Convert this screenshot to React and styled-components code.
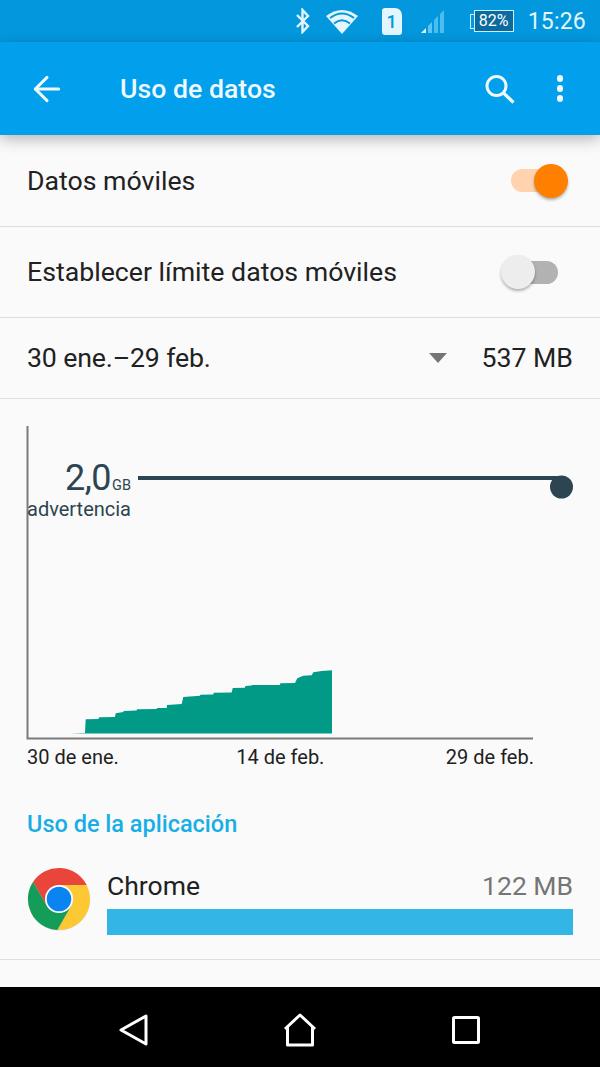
import React from 'react';
import styled, { createGlobalStyle } from 'styled-components';
import { ArrowLeft } from 'lucide-react';

const GlobalStyle = createGlobalStyle`
	html, body {
		margin: 0;
		padding: 0;
		background: #fafafa;
		font-family: Roboto, "Liberation Sans", sans-serif;
	}
`;

const Screen = styled.div`
	width: 600px;
	height: 1067px;
	display: flex;
	flex-direction: column;
	overflow: hidden;
	background: #fafafa;
	color: #212121;
`;

const StatusBar = styled.div`
	height: 42px;
	flex: none;
	background: #0398dd;
	color: #e3f5fd;
	display: flex;
	align-items: center;
	justify-content: flex-end;
	padding-right: 14px;
`;

const StatusIcon = styled.svg`
	display: block;
	flex: none;
	margin-left: ${(p) => p.$gap || 0}px;
`;

const SimBadge = styled.div`
	width: 20px;
	height: 27px;
	margin-left: 23px;
	background: #e3f5fd;
	border-radius: 3px 7px 3px 3px;
	color: #0398dd;
	font-size: 18px;
	font-weight: 500;
	line-height: 27px;
	text-align: center;
`;

const Battery = styled.div`
	position: relative;
	width: 38px;
	height: 20px;
	margin-left: 29px;
	background: #0b6a9e;
	border: 1px solid #cfeefc;
	color: #fff;
	font-size: 16px;
	line-height: 20px;
	text-align: center;
	&::before {
		content: '';
		position: absolute;
		left: -5px;
		top: 3px;
		width: 3px;
		height: 13px;
		border: 1px solid #cfeefc;
		border-right: 0;
	}
`;

const Clock = styled.div`
	margin-left: 14px;
	font-size: 23px;
	letter-spacing: 0.2px;
`;

const Toolbar = styled.div`
	height: 93px;
	flex: none;
	background: #029fec;
	color: #eef9fe;
	display: flex;
	align-items: center;
	padding: 0 37px 0 27px;
	box-shadow: 0 4px 14px rgba(0, 0, 0, 0.28);
	position: relative;
	z-index: 1;
`;

const Title = styled.div`
	margin-left: 53px;
	flex: 1;
	font-size: 26.7px;
	font-weight: 500;
`;

const MoreDots = styled.div`
	display: flex;
	flex-direction: column;
	gap: 3.5px;
	margin-left: 42px;
	span {
		width: 6.5px;
		height: 6.5px;
		border-radius: 50%;
		background: #eef9fe;
	}
`;

const Row = styled.div`
	height: ${(p) => p.$height}px;
	flex: none;
	display: flex;
	align-items: center;
	padding: 0 27px;
	border-bottom: 1px solid #dedede;
	font-size: 26.7px;
`;

const RowLabel = styled.div`
	flex: 1;
`;

const DateLabel = styled(RowLabel)`
	letter-spacing: -0.15px;
`;

const SwitchTrack = styled.div`
	position: relative;
	width: 47px;
	height: 23px;
	margin-right: 15px;
	border-radius: 12px;
	background: ${(p) => (p.$on ? '#ffd3ad' : '#b2b2b2')};
`;

const SwitchThumb = styled.div`
	position: absolute;
	top: -5.5px;
	${(p) => (p.$on ? 'right: -10px;' : 'left: -10px;')}
	width: 34px;
	height: 34px;
	border-radius: 50%;
	background: ${(p) => (p.$on ? '#ff8000' : '#ededed')};
	box-shadow: 0 2px 3px rgba(0, 0, 0, 0.3);
`;

const Caret = styled.div`
	width: 0;
	height: 0;
	margin-right: 34px;
	border-left: 9px solid transparent;
	border-right: 9px solid transparent;
	border-top: 10px solid #757575;
`;

const ChartArea = styled.div`
	position: relative;
	height: 342px;
	flex: none;
`;

const ChartSvg = styled.svg`
	display: block;
	position: absolute;
	left: 0;
	top: 0;
`;

const LimitLabel = styled.div`
	position: absolute;
	left: 27px;
	top: 68px;
	width: 104px;
	color: #2d4550;
	text-align: right;
`;

const LimitValue = styled.div`
	font-size: 36px;
	line-height: 22px;
	letter-spacing: -0.5px;
	small {
		font-size: 14.5px;
		margin-left: 1px;
		letter-spacing: 0;
	}
`;

const LimitCaption = styled.div`
	font-size: 20px;
	line-height: 24px;
	white-space: nowrap;
`;

const AxisLabels = styled.div`
	display: flex;
	justify-content: space-between;
	width: 507px;
	margin-left: 27px;
	margin-top: 4px;
	font-size: 20px;
	line-height: 24px;
	span:nth-child(2) {
		margin-right: 4px;
	}
`;

const SectionTitle = styled.div`
	margin: 41px 0 0 27px;
	font-size: 23.5px;
	font-weight: 500;
	line-height: 28px;
	color: #17aee6;
`;

const AppRow = styled.div`
	display: flex;
	align-items: flex-start;
	margin-top: 29px;
	padding: 0 27px;
	height: 92px;
	border-bottom: 1px solid #dedede;
`;

const AppBody = styled.div`
	flex: 1;
	margin-left: 16px;
`;

const AppHead = styled.div`
	display: flex;
	justify-content: space-between;
	font-size: 26.5px;
	line-height: 34px;
	margin-top: 2px;
	span + span {
		color: #757575;
	}
`;

const UsageBar = styled.div`
	height: 26px;
	margin-top: 6px;
	background: #33b5e5;
`;

const NavBar = styled.div`
	margin-top: auto;
	height: 74px;
	padding-top: 6px;
	flex: none;
	background: #000;
	display: grid;
	grid-template-columns: repeat(3, 166px);
	justify-content: center;
	justify-items: center;
	align-items: center;
`;

function ChromeLogo() {
	return (
		<svg width="64" height="64" viewBox="0 0 64 64" style={{ flex: 'none' }}>
			<circle cx="32" cy="32.6" r="31" fill="#000" opacity="0.14" />
			<path d="M59.7 18 A31 31 0 0 0 6 15 L19.9 39 L32 32 L32 18 Z" fill="#e9453a" />
			<path d="M59.7 18 A31 31 0 0 1 30.3 63 L44.1 39 L32 32 L32 18 Z" fill="#fcc934" />
			<path d="M6 15 A31 31 0 0 0 30.3 63 L44.1 39 L32 32 L19.9 39 Z" fill="#149d58" />
			<circle cx="32" cy="32" r="14" fill="#fff" />
			<circle cx="32" cy="32" r="12.3" fill="#0a84f0" />
		</svg>
	);
}

const areaPoints =
	'70,733.5 85,733 85.7,719.3 98.3,719 99.3,717.3 115,717 115.7,713.3 123.3,712 123.7,711 136.7,710.5 137,709.3 156.7,709 157,708 166.7,708 167,705 181.7,704 183.3,697 200,695.7 200.3,694.7 213.3,694.5 213.7,692.7 231.7,692.5 232.7,688 245,687.7 245.3,686 251.7,685.5 252,685 280,685 280.3,683.3 295,683 297.3,678.3 303.3,675.7 311.7,675.3 313.3,672.3 321.7,671 332,670.3 332,733.5';

export default function App() {
	return (
		<Screen>
			<GlobalStyle />
			<StatusBar>
				<StatusIcon width="16" height="26" viewBox="0 0 16 26">
					<path d="M2 7 L13 18 L7.5 24 L7.5 2 L13 8 L2 19" fill="none" stroke="#e3f5fd" strokeWidth="2.4" />
				</StatusIcon>
				<StatusIcon $gap={14} width="34" height="28" viewBox="0 0 34 28">
					<path d="M17 27 L1 9 Q17 -3 33 9 Z" fill="#e3f5fd" />
					<path d="M5 11 Q17 2 29 11" fill="none" stroke="#0398dd" strokeWidth="2" />
					<path d="M9 16.5 Q17 10 25 16.5" fill="none" stroke="#0398dd" strokeWidth="2" />
				</StatusIcon>
				<SimBadge>1</SimBadge>
				<StatusIcon $gap={18} width="25" height="26" viewBox="0 0 25 26">
					<path d="M1 25 L6 20 L6 25 Z" fill="#e3f5fd" />
					<path d="M8 18 L12 14 L12 25 L8 25 Z" fill="#5cc6f2" />
					<path d="M14 12 L18 8 L18 25 L14 25 Z" fill="#4cbdef" />
					<path d="M20 6 L24 2 L24 25 L20 25 Z" fill="#4cbdef" />
				</StatusIcon>
				<Battery>82%</Battery>
				<Clock>15:26</Clock>
			</StatusBar>
			<Toolbar>
				<ArrowLeft size={40} strokeWidth={1.8} />
				<Title>Uso de datos</Title>
				<svg width="30" height="30" viewBox="0 0 30 30">
					<circle cx="11.5" cy="12" r="9.5" fill="none" stroke="#eef9fe" strokeWidth="3" />
					<path d="M18.5 19 L28.5 28.5" stroke="#eef9fe" strokeWidth="3.2" />
				</svg>
				<MoreDots>
					<span />
					<span />
					<span />
				</MoreDots>
			</Toolbar>
			<Row $height={91}>
				<RowLabel>Datos móviles</RowLabel>
				<SwitchTrack $on>
					<SwitchThumb $on />
				</SwitchTrack>
			</Row>
			<Row $height={90}>
				<RowLabel>Establecer límite datos móviles</RowLabel>
				<SwitchTrack>
					<SwitchThumb />
				</SwitchTrack>
			</Row>
			<Row $height={80}>
				<DateLabel>30 ene.–29 feb.</DateLabel>
				<Caret />
				<span>537 MB</span>
			</Row>
			<ChartArea>
				<ChartSvg width="600" height="342" viewBox="0 399 600 342">
					<path d="M27.5 426 V738.5 H533" fill="none" stroke="#7a7a7a" strokeWidth="2" />
					<polygon points={areaPoints} fill="#009a87" />
					<path d="M138 478 H561" stroke="#2d4550" strokeWidth="4" />
					<circle cx="561.5" cy="487" r="11.5" fill="#2d4550" />
				</ChartSvg>
				<LimitLabel>
					<LimitValue>
						2,0<small>GB</small>
					</LimitValue>
					<LimitCaption>advertencia</LimitCaption>
				</LimitLabel>
			</ChartArea>
			<AxisLabels>
				<span>30 de ene.</span>
				<span>14 de feb.</span>
				<span>29 de feb.</span>
			</AxisLabels>
			<SectionTitle>Uso de la aplicación</SectionTitle>
			<AppRow>
				<ChromeLogo />
				<AppBody>
					<AppHead>
						<span>Chrome</span>
						<span>122 MB</span>
					</AppHead>
					<UsageBar />
				</AppBody>
			</AppRow>
			<NavBar>
				<svg width="32" height="34" viewBox="0 0 32 34">
					<path d="M3 17 L28 3 V31 Z" fill="none" stroke="#fff" strokeWidth="3" strokeLinejoin="round" />
				</svg>
				<svg width="36" height="34" viewBox="0 0 36 34">
					<path d="M3 16 L18 2 L33 16 M5.5 14 V32 H30.5 V14" fill="none" stroke="#fff" strokeWidth="3" strokeLinejoin="round" />
				</svg>
				<svg width="28" height="28" viewBox="0 0 28 28">
					<rect x="1.5" y="1.5" width="25" height="25" rx="1" fill="none" stroke="#fff" strokeWidth="3" />
				</svg>
			</NavBar>
		</Screen>
	);
}
